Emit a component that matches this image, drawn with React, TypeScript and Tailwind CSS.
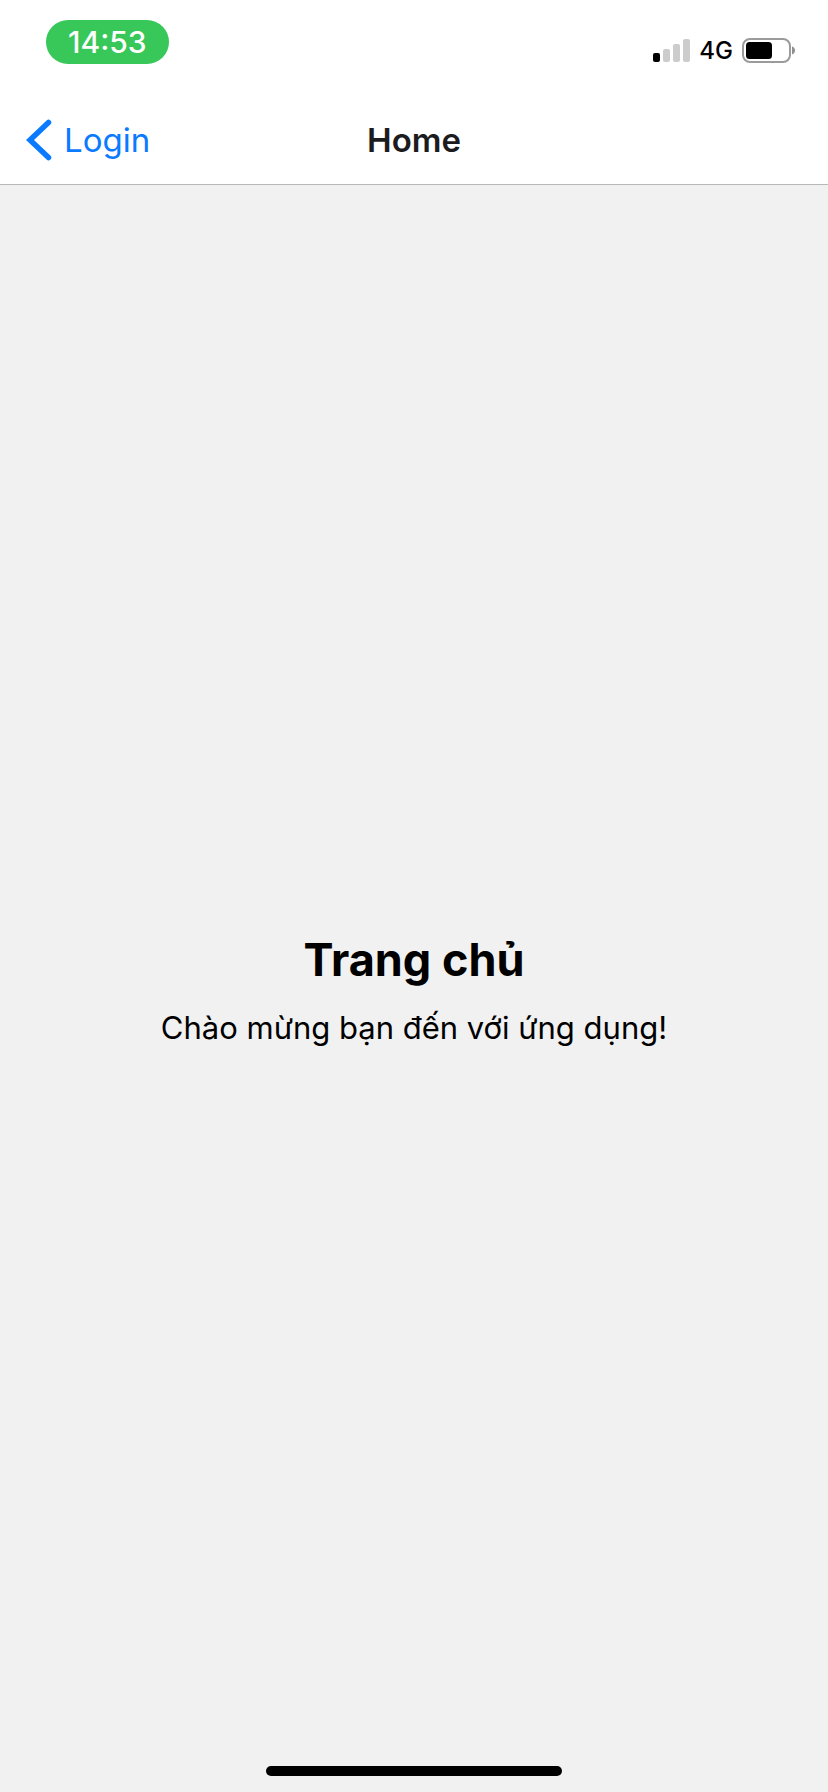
function SignalIcon() {
  return (
    <svg width="37" height="24" viewBox="0 0 37 24" role="img" aria-label="Signal: one bar">
      <rect x="0" y="14" width="7" height="9" rx="2" fill="#000" />
      <rect x="10" y="10" width="7" height="13" rx="2" fill="#cccccc" />
      <rect x="20" y="5" width="7" height="18" rx="2" fill="#cccccc" />
      <rect x="30" y="0" width="7" height="23" rx="2" fill="#cccccc" />
    </svg>
  );
}

function BatteryIcon() {
  return (
    <svg width="54" height="26" viewBox="0 0 54 26" role="img" aria-label="Battery">
      <rect x="1" y="1" width="47" height="23" rx="7" fill="none" stroke="#9b9b9b" strokeWidth="2" />
      <rect x="4" y="4" width="26" height="17" rx="3.5" fill="#000" />
      <path d="M50 8.500c2 .6 3 2.200 3 4s-1 3.400-3 4z" fill="#8f8f8f" />
    </svg>
  );
}

function StatusBar() {
  return (
    <div className="flex h-22 items-start justify-between pt-5 pr-8 pl-[46px]">
      <div className="flex h-11 items-center justify-center rounded-full bg-[#38c759] px-[22px] text-[30px] leading-none font-medium text-white">
        14:53
      </div>
      <div className="flex items-center gap-[9px] pt-[17px]">
        <SignalIcon />
        <span className="text-2xl leading-7 font-medium text-black">4G</span>
        <BatteryIcon />
      </div>
    </div>
  );
}

function NavigationBar() {
  return (
    <div className="grid h-24 grid-cols-[1fr_auto_1fr] items-center px-[26px] pt-2">
      <a href="#login" className="flex items-center gap-3 justify-self-start text-[33px] leading-[42px] text-[#0a7aff]">
        <svg width="26" height="42" viewBox="0 0 26 42" fill="none" aria-hidden="true">
          <path
            d="M22.500 3.500 4 21l18.500 17.500"
            stroke="currentColor"
            strokeWidth="5.500"
            strokeLinecap="round"
            strokeLinejoin="miter"
          />
        </svg>
        Login
      </a>
      <h1 className="text-[33px] leading-[42px] font-semibold text-[#1c1c1e]">Home</h1>
    </div>
  );
}

export default function App() {
  return (
    <div className="relative flex min-h-screen flex-col bg-[#f1f1f1] font-['Inter','Liberation_Sans',sans-serif]">
      <header className="border-b border-[#b8b8b9] bg-white">
        <StatusBar />
        <NavigationBar />
      </header>
      <main className="flex flex-1 flex-col items-center justify-center gap-5 px-8 text-center text-black">
        <h2 className="text-[45px] leading-[58px] font-bold">Trang chủ</h2>
        <p className="text-[31px] leading-[38px]">Chào mừng bạn đến với ứng dụng!</p>
      </main>
      <div className="absolute bottom-4 left-1/2 h-[10px] w-[296px] -translate-x-1/2 rounded-full bg-black" />
    </div>
  );
}
